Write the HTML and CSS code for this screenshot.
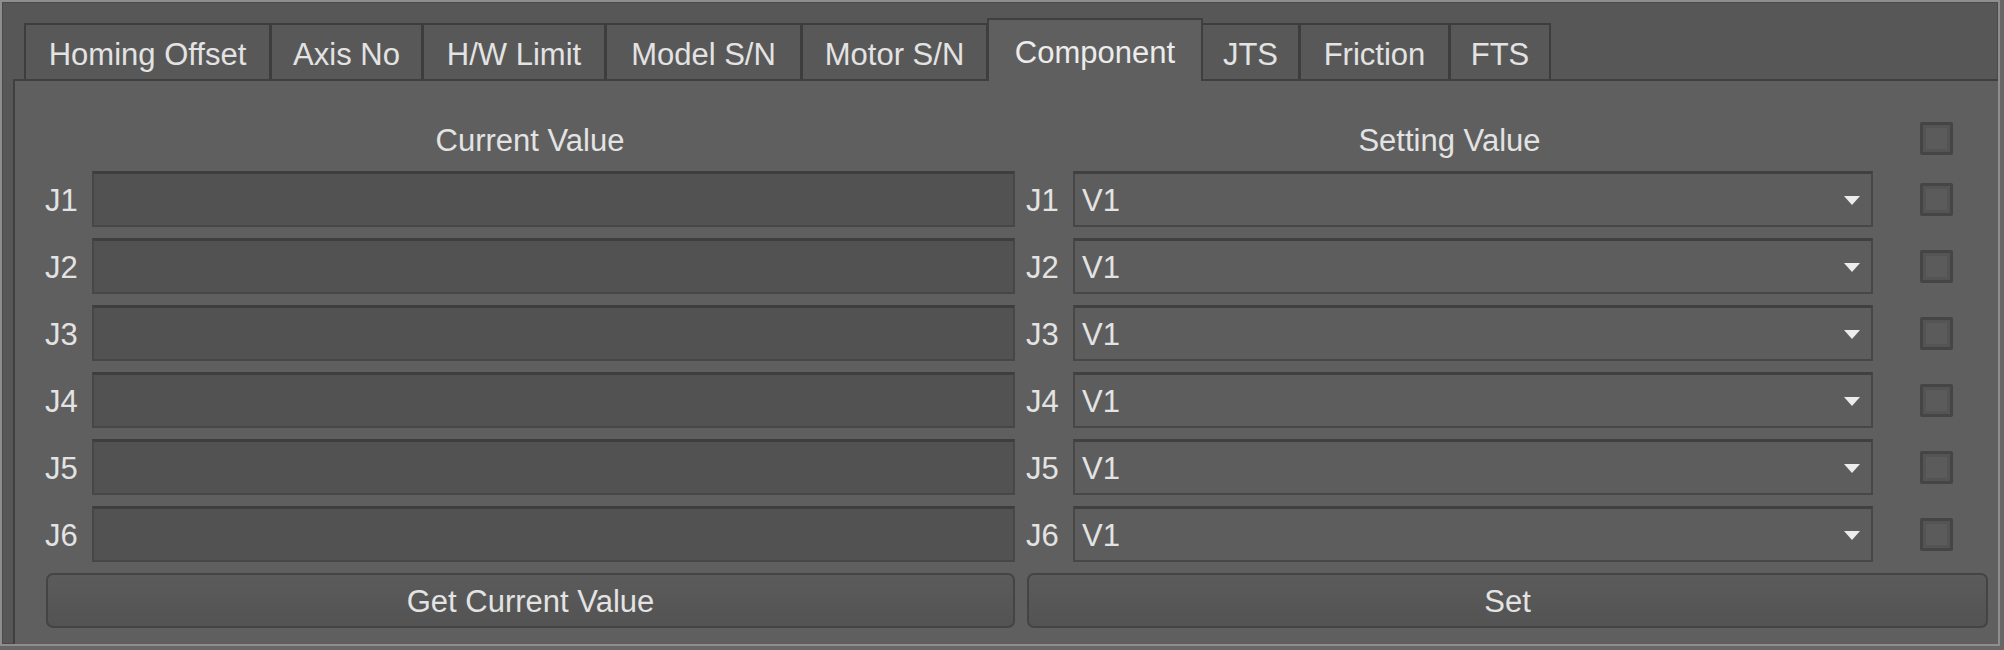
FILE: index.html
```html
<!DOCTYPE html>
<html>
<head>
<meta charset="utf-8">
<link rel="stylesheet" href="styles.css">
</head>
<body>
<div class="window">
  <div class="tabs">
    <div class="tab t1">Homing Offset</div>
    <div class="tab t2">Axis No</div>
    <div class="tab t3">H/W Limit</div>
    <div class="tab t4">Model S/N</div>
    <div class="tab t5">Motor S/N</div>
    <div class="tab t6 active">Component</div>
    <div class="tab t7">JTS</div>
    <div class="tab t8">Friction</div>
    <div class="tab t9">FTS</div>
  </div>
  <div class="panel">
    <div class="header">
      <div class="head head-left">Current Value</div>
      <div class="head head-right">Setting Value</div>
      <div class="spacer"></div>
      <div class="check"></div>
    </div>
    <div class="grid">
      <div class="label">J1</div><div class="field"></div><div class="label label2">J1</div>
      <div class="combo"><span>V1</span><svg class="arrow" width="16" height="9" viewBox="0 0 16 9"><polygon points="0,0 16,0 8,9" fill="#ececec"/></svg></div>
      <div class="spacer"></div><div class="check"></div><div class="spacer"></div>

      <div class="label">J2</div><div class="field"></div><div class="label label2">J2</div>
      <div class="combo"><span>V1</span><svg class="arrow" width="16" height="9" viewBox="0 0 16 9"><polygon points="0,0 16,0 8,9" fill="#ececec"/></svg></div>
      <div class="spacer"></div><div class="check"></div><div class="spacer"></div>

      <div class="label">J3</div><div class="field"></div><div class="label label2">J3</div>
      <div class="combo"><span>V1</span><svg class="arrow" width="16" height="9" viewBox="0 0 16 9"><polygon points="0,0 16,0 8,9" fill="#ececec"/></svg></div>
      <div class="spacer"></div><div class="check"></div><div class="spacer"></div>

      <div class="label">J4</div><div class="field"></div><div class="label label2">J4</div>
      <div class="combo"><span>V1</span><svg class="arrow" width="16" height="9" viewBox="0 0 16 9"><polygon points="0,0 16,0 8,9" fill="#ececec"/></svg></div>
      <div class="spacer"></div><div class="check"></div><div class="spacer"></div>

      <div class="label">J5</div><div class="field"></div><div class="label label2">J5</div>
      <div class="combo"><span>V1</span><svg class="arrow" width="16" height="9" viewBox="0 0 16 9"><polygon points="0,0 16,0 8,9" fill="#ececec"/></svg></div>
      <div class="spacer"></div><div class="check"></div><div class="spacer"></div>

      <div class="label">J6</div><div class="field"></div><div class="label label2">J6</div>
      <div class="combo"><span>V1</span><svg class="arrow" width="16" height="9" viewBox="0 0 16 9"><polygon points="0,0 16,0 8,9" fill="#ececec"/></svg></div>
      <div class="spacer"></div><div class="check"></div><div class="spacer"></div>

      <div class="btn btn-get">Get Current Value</div>
      <div class="btn btn-set">Set</div>
    </div>
  </div>
</div>
</body>
</html>
```

FILE: styles.css
```css
html, body {
  margin: 0;
  padding: 0;
}
body {
  width: 2004px;
  height: 650px;
  background: #676767;
  font-family: "Liberation Sans", Arial, sans-serif;
  font-size: 31px;
  color: #e3e3e3;
  overflow: hidden;
}
.window {
  box-sizing: border-box;
  width: 2000px;
  height: 646px;
  border: 2px solid #8e8e8e;
  box-shadow: inset 0 0 0 1px #4b4b4b;
  background: #575757;
  padding: 16px 0 0 11px;
  display: flex;
  flex-direction: column;
}
.tabs {
  display: flex;
  align-items: flex-end;
  height: 61px;
  padding-left: 11px;
  position: relative;
  z-index: 2;
}
.tab {
  box-sizing: border-box;
  height: 56px;
  flex: none;
  background: #585858;
  border: 2px solid #3d3d3d;
  border-right-width: 1px;
  border-bottom: none;
  display: flex;
  justify-content: center;
  align-items: center;
  padding-top: 6px;
  white-space: nowrap;
}
.tab.active {
  height: 63px;
  margin-bottom: -2px;
  background: #5f5f5f;
  border-right-width: 2px;
  border-color: #3f3f3f;
  padding-top: 5px;
  padding-bottom: 0;
  color: #ececec;
}
.t1 { width: 246px; }
.t2 { width: 152px; }
.t3 { width: 183px; }
.t4 { width: 196px; }
.t5 { width: 186px; }
.t6 { width: 216px; }
.t7 { width: 96px; border-left: none; }
.t8 { width: 150px; }
.t9 { width: 102px; border-right-width: 2px; }

.panel {
  flex: 1;
  background: #5f5f5f;
  border-left: 2px solid #3f3f3f;
  border-top: 2px solid #3f3f3f;
  padding: 37px 0 0 30px;
  position: relative;
  z-index: 1;
}
.header {
  display: grid;
  grid-template-columns: 970px 858px 47px 33px;
  height: 33px;
  margin-bottom: 20px;
}
.head {
  display: flex;
  justify-content: center;
  align-items: center;
  padding-top: 5px;
  white-space: nowrap;
}
.head-right { padding-left: 11px; }
.grid {
  display: grid;
  grid-template-columns: 47px 923px 58px 800px 47px 33px 35px;
  grid-template-rows: repeat(6, 56px) 55px;
  row-gap: 11px;
}
.label {
  display: flex;
  align-items: center;
  padding-top: 4px;
}
.label2 { padding-left: 11px; }
.field {
  box-sizing: border-box;
  background: #525252;
  border: 2px solid #474747;
  border-top: 3px solid #3e3e3e;
}
.combo {
  box-sizing: border-box;
  background: #5d5d5d;
  border: 2px solid #474747;
  border-top: 3px solid #404040;
  display: flex;
  align-items: center;
  justify-content: space-between;
  padding: 3px 11px 0 7px;
}
.combo span { display: block; }
.arrow { display: block; margin-top: -2px; }
.check {
  box-sizing: border-box;
  width: 33px;
  height: 33px;
  align-self: center;
  border: 3px solid #454545;
  border-radius: 2px;
  background: #5b5b5b;
  box-shadow: inset 0 0 0 3px #545454;
}
.btn {
  box-sizing: border-box;
  border: 2px solid #444444;
  border-radius: 7px;
  background: linear-gradient(#5b5b5b, #535353);
  display: flex;
  justify-content: center;
  align-items: center;
  padding-top: 2px;
}
.btn-get { grid-column: 1 / 3; margin-left: 1px; }
.btn-set { grid-column: 3 / 8; margin-left: 12px; }
```
